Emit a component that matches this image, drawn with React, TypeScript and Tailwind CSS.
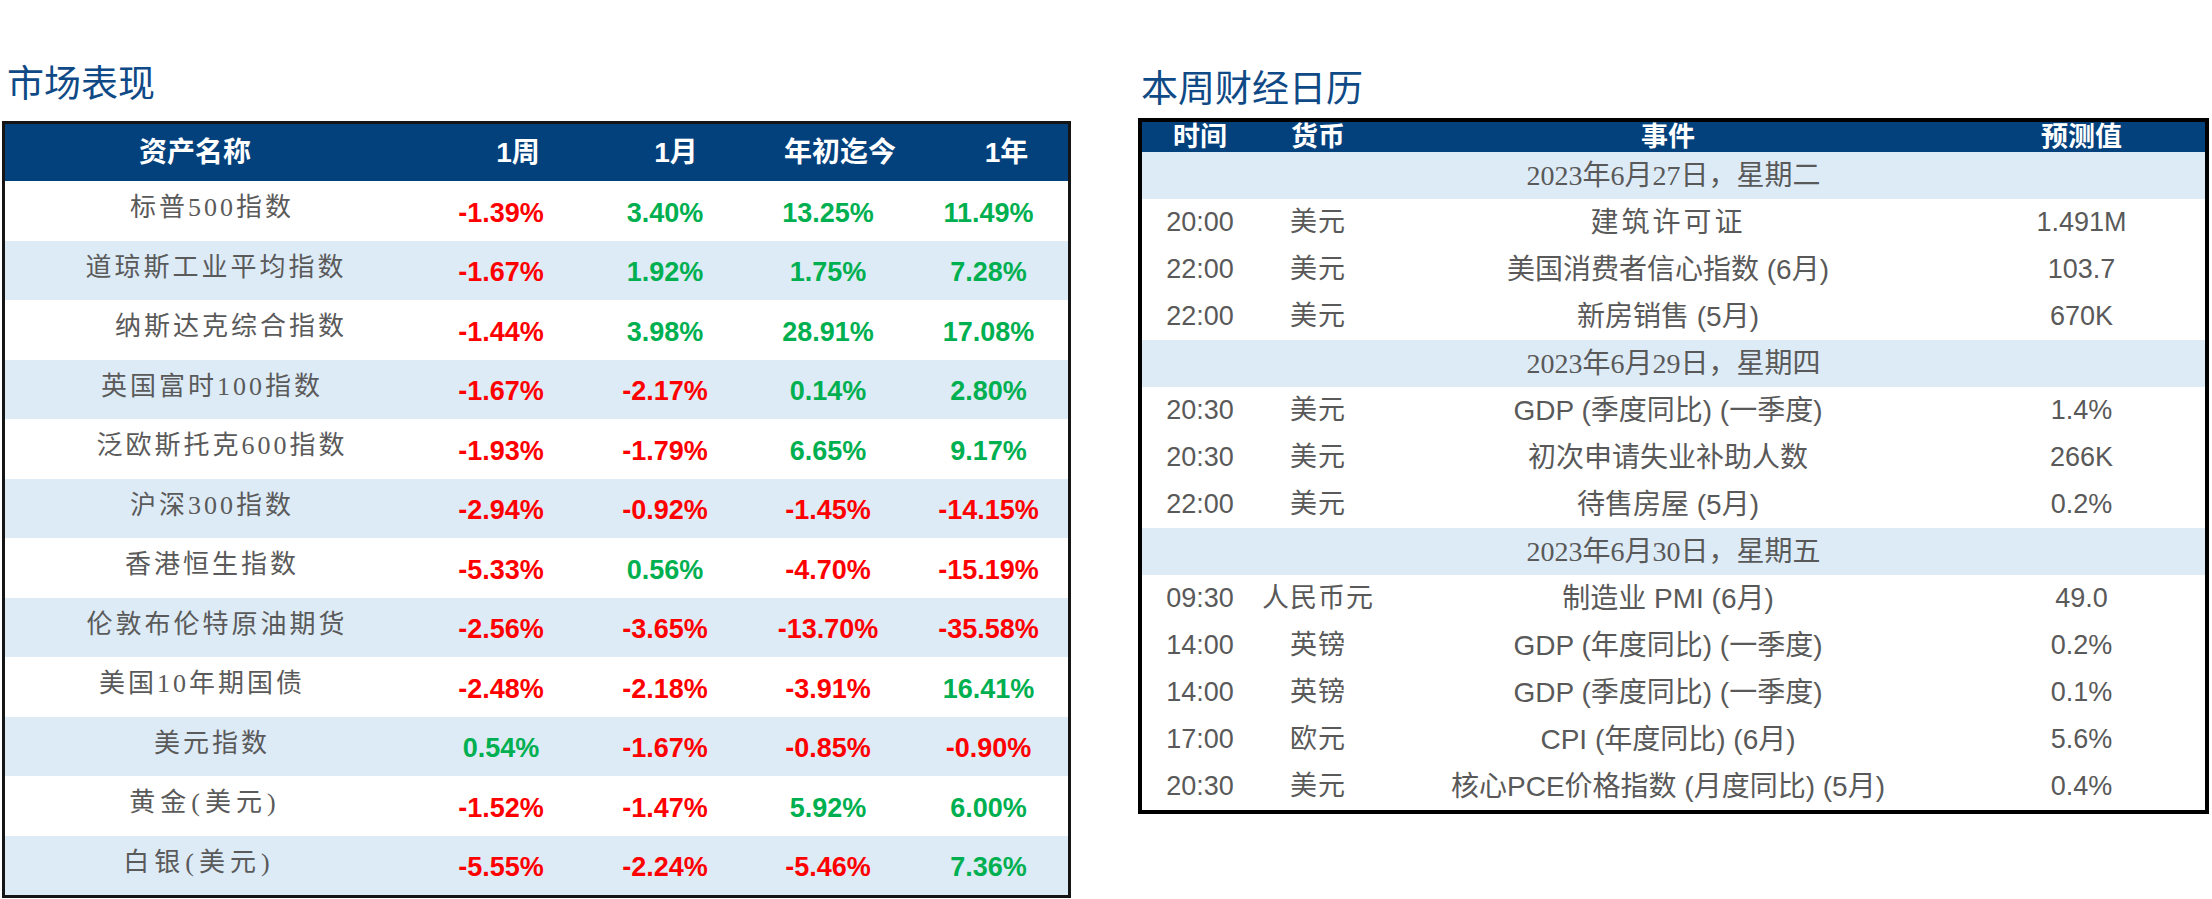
import clsx from "clsx";

const assets = [
  { name: "标普500指数", w: "-1.39%", m: "3.40%", ytd: "13.25%", y: "11.49%", nc: "" },
  { name: "道琼斯工业平均指数", w: "-1.67%", m: "1.92%", ytd: "1.75%", y: "7.28%", nc: "pl-[8px]" },
  { name: "纳斯达克综合指数", w: "-1.44%", m: "3.98%", ytd: "28.91%", y: "17.08%", nc: "pl-[38px]" },
  { name: "英国富时100指数", w: "-1.67%", m: "-2.17%", ytd: "0.14%", y: "2.80%", nc: "" },
  { name: "泛欧斯托克600指数", w: "-1.93%", m: "-1.79%", ytd: "6.65%", y: "9.17%", nc: "pl-[20px]" },
  { name: "沪深300指数", w: "-2.94%", m: "-0.92%", ytd: "-1.45%", y: "-14.15%", nc: "" },
  { name: "香港恒生指数", w: "-5.33%", m: "0.56%", ytd: "-4.70%", y: "-15.19%", nc: "" },
  { name: "伦敦布伦特原油期货", w: "-2.56%", m: "-3.65%", ytd: "-13.70%", y: "-35.58%", nc: "pl-[10px]" },
  { name: "美国10年期国债", w: "-2.48%", m: "-2.18%", ytd: "-3.91%", y: "16.41%", nc: "pr-[20px]" },
  { name: "美元指数", w: "0.54%", m: "-1.67%", ytd: "-0.85%", y: "-0.90%", nc: "" },
  { name: "黄金(美元)", w: "-1.52%", m: "-1.47%", ytd: "5.92%", y: "6.00%", nc: "pr-[14px] tracking-[5px]" },
  { name: "白银(美元)", w: "-5.55%", m: "-2.24%", ytd: "-5.46%", y: "7.36%", nc: "pr-[26px] tracking-[5px]" },
];

type CalRow =
  | { date: string }
  | { time: string; cur: string; event: string; fc: string; ec?: string };

const calendar: CalRow[] = [
  { date: "2023年6月27日，星期二" },
  { time: "20:00", cur: "美元", event: "建筑许可证", fc: "1.491M", ec: "tracking-[3px]" },
  { time: "22:00", cur: "美元", event: "美国消费者信心指数 (6月)", fc: "103.7" },
  { time: "22:00", cur: "美元", event: "新房销售 (5月)", fc: "670K" },
  { date: "2023年6月29日，星期四" },
  { time: "20:30", cur: "美元", event: "GDP (季度同比) (一季度)", fc: "1.4%" },
  { time: "20:30", cur: "美元", event: "初次申请失业补助人数", fc: "266K" },
  { time: "22:00", cur: "美元", event: "待售房屋 (5月)", fc: "0.2%" },
  { date: "2023年6月30日，星期五" },
  { time: "09:30", cur: "人民币元", event: "制造业 PMI (6月)", fc: "49.0" },
  { time: "14:00", cur: "英镑", event: "GDP (年度同比) (一季度)", fc: "0.2%" },
  { time: "14:00", cur: "英镑", event: "GDP (季度同比) (一季度)", fc: "0.1%" },
  { time: "17:00", cur: "欧元", event: "CPI (年度同比) (6月)", fc: "5.6%" },
  { time: "20:30", cur: "美元", event: "核心PCE价格指数 (月度同比) (5月)", fc: "0.4%" },
];

const pct = (v: string) => (v.startsWith("-") ? "text-[#ff0000]" : "text-[#00b050]");

const MarketTable = () => (
  <div className="w-[1069px] flex flex-col pt-[63px]">
    <h2 className="h-[37px] leading-[37px] text-[37px] text-[#0f4a86] mb-[21px] pl-[5px] font-['Noto_Sans_CJK_SC',sans-serif]">
      市场表现
    </h2>
    <div className="border-[3px] border-[#151515] font-['Liberation_Sans','Noto_Sans_CJK_SC',sans-serif]">
      <div className="grid grid-cols-[414px_164px_164px_162px_1fr] h-[57px] items-center bg-[#03417d] text-white font-bold text-[28px] text-center">
        <div className="pr-[34px]">资产名称</div>
        <div className="pl-[34px]">1周</div>
        <div className="pl-[22px]">1月</div>
        <div className="pl-[24px]">年初迄今</div>
        <div className="pl-[36px]">1年</div>
      </div>
      {assets.map((a, i) => (
        <div
          key={a.name}
          className={clsx(
            "grid grid-cols-[414px_164px_164px_162px_1fr] h-[59.5px] items-center text-center",
            i % 2 ? "bg-[#ddebf7]" : "bg-white"
          )}
        >
          <div
            className={clsx(
              "font-['Liberation_Serif','Noto_Sans_CJK_SC',serif] text-[26px] tracking-[3px] text-[#5a5a5a] -mt-[6px]",
              a.nc
            )}
          >
            {a.name}
          </div>
          {[a.w, a.m, a.ytd, a.y].map((v, j) => (
            <div key={j} className={clsx("text-[27px] font-bold mt-[4px]", pct(v))}>
              {v}
            </div>
          ))}
        </div>
      ))}
    </div>
  </div>
);

const CalendarTable = () => (
  <div className="w-[1071px] flex flex-col pt-[68px]">
    <h2 className="h-[37px] leading-[37px] text-[37px] text-[#0f4a86] mb-[13px] pl-[3px] font-['Noto_Sans_CJK_SC',sans-serif]">
      本周财经日历
    </h2>
    <div className="border-[4px] border-black font-['Liberation_Sans','Noto_Sans_CJK_SC',sans-serif] text-[#595959]">
      <div className="grid grid-cols-[116px_120px_580px_1fr] h-[30px] leading-[30px] bg-[#03417d] text-white font-bold text-[27px] text-center">
        <div>时间</div>
        <div>货币</div>
        <div>事件</div>
        <div>预测值</div>
      </div>
      {calendar.map((r, i) =>
        "date" in r ? (
          <div
            key={i}
            className="h-[47px] flex items-center justify-center bg-[#ddebf7] font-['Liberation_Serif','Noto_Sans_CJK_SC',serif] text-[28px]"
          >
            {r.date}
          </div>
        ) : (
          <div
            key={i}
            className="grid grid-cols-[116px_120px_580px_1fr] h-[47px] items-center text-center bg-white text-[27px]"
          >
            <div>{r.time}</div>
            <div className="tracking-[1px]">{r.cur}</div>
            <div className={clsx("text-[28px]", r.ec)}>{r.event}</div>
            <div>{r.fc}</div>
          </div>
        )
      )}
    </div>
  </div>
);

export default function App() {
  return (
    <div className="w-[2212px] h-[899px] bg-white flex gap-[67px] pl-[2px] overflow-hidden">
      <MarketTable />
      <CalendarTable />
    </div>
  );
}
